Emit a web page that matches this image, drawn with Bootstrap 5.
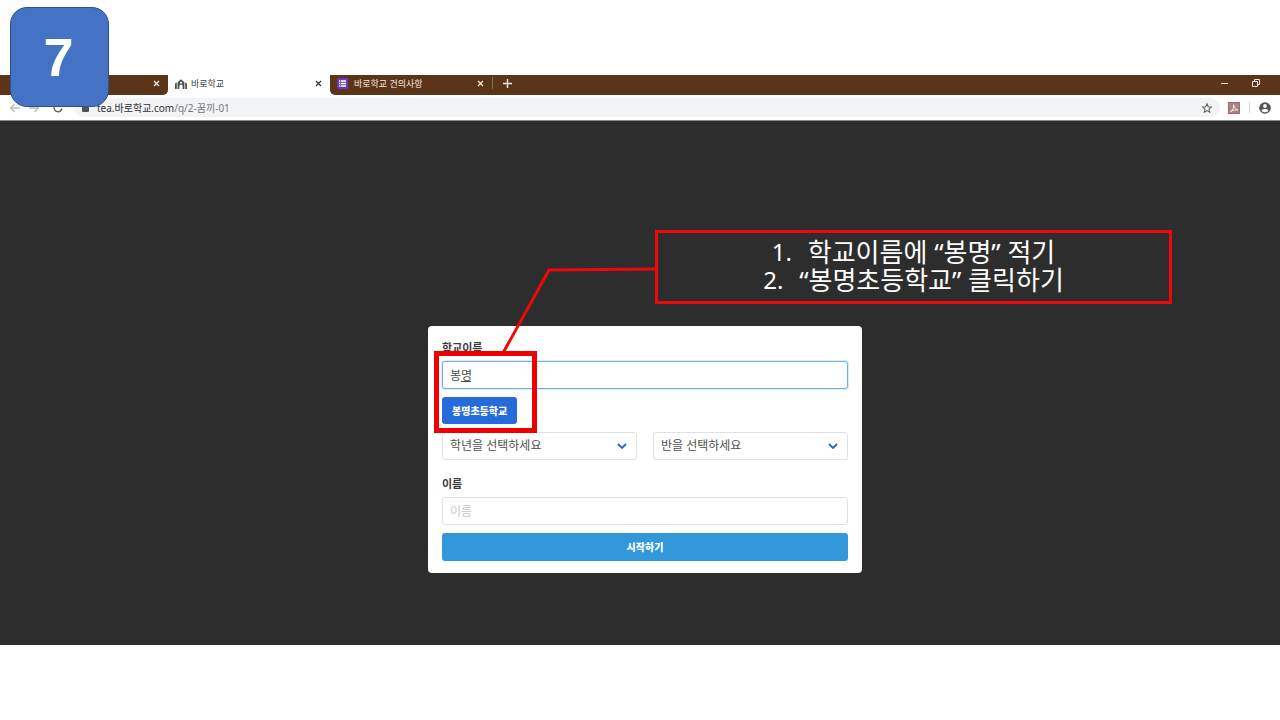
<!DOCTYPE html>
<html lang="ko">
<head>
<meta charset="utf-8">
<meta name="viewport" content="width=device-width, initial-scale=1">
<title>바로학교</title>
<link href="https://cdn.jsdelivr.net/npm/bootstrap@5.3.0/dist/css/bootstrap.min.css" rel="stylesheet">
<style>
  body { font-family: "Noto Sans", "Noto Sans CJK KR", sans-serif; background: #fff; color: #3c3c3c; }
  button { line-height: 1; }
  svg { display: block; flex: none; }
  .slide { padding: 75px 0; }
  .step-no { left: 10px; top: 7px; width: 99px; height: 100px; border: 1px solid #2f528f; border-radius: 17px; background: #4472c4; color: #fff; font-family: "Liberation Sans", sans-serif; font-size: 54px; line-height: 1; padding-right: 2px; z-index: 5; }
  .tab-strip { height: 20px; }
  .tab-item { width: 162px; padding: 0 8px 3px 7px; font-size: 9px; line-height: 16px; }
  .tab-first { width: 168px; border-bottom-right-radius: 5px; }
  .tab-rest { border-bottom-left-radius: 5px; }
  .brown { background: #5c3417; color: #f3e9e0; }
  .bare { background: none; border: 0; padding: 0; color: inherit; }
  .tab-line { width: 1px; height: 12px; background: #8b6b55; }
  .tab-gap { gap: 6px; }
  .toolbar { height: 26px; border-bottom: 1px solid #8a8a8a; padding: 0 9px; color: #5f6368; }
  .nav-tools { width: 65px; gap: 9px; }
  .address { height: 19px; border-radius: 10px; background: #f1f3f4; padding: 0 8px; }
  .address-text { font-size: 10px; line-height: 16px; color: #74787c; text-decoration: none; }
  .address-text b { font-weight: 400; color: #303236; }
  .stage { background: #2d2d2d; padding: 205px 0 72px 10px; }
  .entry { width: 434px; padding: 14px 14px 12px; background: #fff; border-radius: 4px; }
  .entry label { font-size: 11px; line-height: 16px; font-weight: 700; margin-bottom: 5px; }
  .entry .form-control, .entry .form-select { height: 28px; padding: 0 7px; font-size: 12px; line-height: 16px; border: 1px solid #dfe1e4; border-radius: 3px; color: #505050; }
  .entry .form-control::placeholder { color: #c8c8c8; }
  .entry .form-control.typing { border-color: #6fb1de; box-shadow: 0 0 0 1px #d5ebf9; }
  .entry .form-select { background-image: url("data:image/svg+xml,%3Csvg xmlns='http://www.w3.org/2000/svg' viewBox='0 0 10 6'%3E%3Cpath d='M1 1l4 4 4-4' fill='none' stroke='%232b62cf' stroke-width='1.8'/%3E%3C/svg%3E"); background-size: 10px 6px; background-position: right 9px center; }
  .entry .btn { height: 28px; padding: 0 10px; border: 0; border-radius: 3px; font-size: 10px; line-height: 16px; font-weight: 900; font-family: "Noto Sans CJK KR", sans-serif; color: #fff; }
  .entry .btn-school { height: 27px; background: #256bdb; }
  .entry .btn-start { background: #3298dc; }
  .fields { row-gap: 8px; }
  .composing { left: 19px; top: 20px; width: 10px; height: 1px; background: #4a4a4a; }
  .mark-box { left: 6px; top: 25px; width: 103px; height: 82px; border: 5px solid #f00000; pointer-events: none; }
  .lead-line { left: 70px; top: -65px; pointer-events: none; }
  .callout { left: 227px; top: -96px; width: 517px; height: 74px; padding-bottom: 2px; border: 3px solid #f00808; color: #fff; font-size: 26px; line-height: 28px; }
  .callout li { display: flex; justify-content: center; white-space: nowrap; }
  .callout .num { width: 36px; font-size: 24px; }
</style>
</head>
<body>
<main class="slide position-relative min-vh-100 d-flex flex-column">
  <div class="step-no position-absolute d-flex align-items-center justify-content-center fw-bold">7</div>

  <header>
    <div class="tab-strip d-flex">
      <div class="tab-item tab-first brown d-flex align-items-center justify-content-end">
        <button class="bare" aria-label="탭 닫기"><svg width="7" height="7" viewBox="0 0 7 7" stroke="currentColor" stroke-width="1.3"><path d="M1 1l5 5M6 1l-5 5"/></svg></button>
      </div>
      <div class="tab-item d-flex align-items-center">
        <svg width="12" height="10" viewBox="0 0 12 10" fill="#505050"><path d="M0 4.500L1.800 3.600V10H0zM12 4.500l-1.800-.9V10H12zM2.600 3.200L6 .3l3.400 2.900V10H7.600V7.200a1.600 1.600 0 0 0-3.200 0V10H2.600zM6 2.700a1 1 0 1 0 0 2 1 1 0 0 0 0-2z" fill-rule="evenodd"/></svg>
        <span class="ms-1">바로학교</span>
        <button class="bare ms-auto" aria-label="탭 닫기"><svg width="7" height="7" viewBox="0 0 7 7" stroke="currentColor" stroke-width="1.3"><path d="M1 1l5 5M6 1l-5 5"/></svg></button>
      </div>
      <div class="tab-rest brown d-flex flex-grow-1">
        <div class="tab-item tab-gap d-flex align-items-center">
          <svg width="11" height="11" viewBox="0 0 11 11"><rect width="11" height="11" rx="1" fill="#673ab7"/><path d="M2 3h1.300M4 3h5M2 5.500h1.300M4 5.500h5M2 8h1.300M4 8h5" stroke="#fff" stroke-width="1.300"/></svg>
          <span>바로학교 건의사항</span>
          <button class="bare ms-auto" aria-label="탭 닫기"><svg width="7" height="7" viewBox="0 0 7 7" stroke="currentColor" stroke-width="1.3"><path d="M1 1l5 5M6 1l-5 5"/></svg></button>
        </div>
        <div class="tab-gap d-flex align-items-center pb-1">
          <span class="tab-line"></span>
          <button class="bare ps-1" aria-label="새 탭"><svg width="9" height="9" viewBox="0 0 9 9" stroke="currentColor" stroke-width="1.400"><path d="M4.500 0v9M0 4.500h9"/></svg></button>
        </div>
        <div class="d-flex align-items-center ms-auto gap-4 pe-3 pb-1">
          <button class="bare" aria-label="최소화"><svg width="8" height="8" viewBox="0 0 8 8" stroke="currentColor"><path d="M1 4.500h7"/></svg></button>
          <button class="bare pe-1" aria-label="이전 크기로"><svg width="8" height="8" viewBox="0 0 8 8" fill="none" stroke="currentColor"><path d="M.5 2.500h5v5h-5zM2.500 2.500v-2h5v5h-2"/></svg></button>
        </div>
      </div>
    </div>
    <div class="toolbar d-flex align-items-center">
      <div class="nav-tools d-flex align-items-center">
        <button class="bare" aria-label="뒤로"><svg width="11" height="10" viewBox="0 0 11 10" fill="none" stroke="#b9bbbe" stroke-width="1.300"><path d="M11 5H1.500M5.500 1l-4 4 4 4"/></svg></button>
        <button class="bare" aria-label="앞으로"><svg width="11" height="10" viewBox="0 0 11 10" fill="none" stroke="#b9bbbe" stroke-width="1.300"><path d="M0 5h9.500M5.500 1l4 4-4 4"/></svg></button>
        <button class="bare ps-1" aria-label="새로고침"><svg width="10" height="10" viewBox="0 0 10 10" fill="none" stroke="#5f6368" stroke-width="1.400"><path d="M8.300 2.300A4 4 0 1 0 9 5.500"/><path d="M9.300 0v3.700H5.600z" fill="#5f6368" stroke="none"/></svg></button>
      </div>
      <div class="address d-flex align-items-center flex-grow-1">
        <svg width="7" height="9" viewBox="0 0 7 9"><path d="M1.700 4V2.300a1.800 1.800 0 0 1 3.600 0V4" fill="none" stroke="#505357"/><rect y="3" width="7" height="6" rx="1" fill="#505357"/></svg>
        <a class="address-text ms-2" href="#"><b>tea.바로학교.com</b>/q/2-꿈끼-01</a>
        <button class="bare ms-auto" aria-label="북마크"><svg width="10" height="10" viewBox="0 0 12 12" fill="none" stroke="#5f6368" stroke-width="1.300"><path d="M6 1l1.500 3.400 3.700.4-2.800 2.500.8 3.700L6 9.100 2.800 11l.8-3.700L.8 4.800l3.700-.4z"/></svg></button>
      </div>
      <div class="d-flex align-items-center gap-2 ps-2">
        <button class="bare" aria-label="PDF"><svg width="12" height="12" viewBox="0 0 12 12"><rect x=".5" y=".5" width="11" height="11" fill="#a98484" stroke="#a46b6b"/><path d="M2.500 9.500C5 8 6 5 5.700 2.800c.6 3 2 4.700 4.300 5.200-2.500-.5-5 .2-7.500 1.500z" fill="none" stroke="#f4e9e9"/></svg></button>
        <svg width="3" height="11" viewBox="0 0 3 11"><path d="M1.500 0v11" stroke="#d5d7d9"/></svg>
        <button class="bare" aria-label="프로필"><svg width="12" height="12" viewBox="0 0 12 12"><circle cx="6" cy="6" r="5.800" fill="#505357"/><circle cx="6" cy="4" r="1.900" fill="#fff"/><path d="M2.400 8.400C3.300 7.300 4.700 7 6 7s2.700.3 3.600 1.400A4.300 4.300 0 0 1 6 10.300a4.300 4.300 0 0 1-3.600-1.900z" fill="#fff"/></svg></button>
      </div>
    </div>
  </header>

  <section class="stage flex-grow-1">
    <form class="entry position-relative mx-auto" onsubmit="return false">
      <div class="fields d-grid">
        <div>
          <label class="d-block" for="school">학교이름</label>
          <div class="position-relative">
            <input id="school" class="form-control typing" type="text" value="봉명">
            <span class="composing position-absolute"></span>
          </div>
        </div>
        <div class="d-flex"><button type="button" class="btn btn-school">봉명초등학교</button></div>
        <div class="row gx-3">
          <div class="col-6"><select class="form-select" aria-label="학년"><option>학년을 선택하세요</option></select></div>
          <div class="col-6"><select class="form-select" aria-label="반"><option>반을 선택하세요</option></select></div>
        </div>
        <div class="pt-2">
          <label class="d-block" for="student">이름</label>
          <input id="student" class="form-control" type="text" placeholder="이름">
        </div>
        <button type="submit" class="btn btn-start w-100">시작하기</button>
      </div>

      <svg class="lead-line position-absolute" width="160" height="95" viewBox="0 0 160 95" fill="none" stroke="#f00808" stroke-width="3"><path d="M5 92L51 9l108-1"/></svg>
      <div class="mark-box position-absolute"></div>
      <ol class="callout position-absolute list-unstyled m-0 d-flex flex-column justify-content-center">
        <li><span class="num">1.</span>학교이름에 “봉명” 적기</li>
        <li><span class="num">2.</span>“봉명초등학교” 클릭하기</li>
      </ol>
    </form>
  </section>
</main>
<script src="https://cdn.jsdelivr.net/npm/bootstrap@5.3.0/dist/js/bootstrap.bundle.min.js"></script>
</body>
</html>
